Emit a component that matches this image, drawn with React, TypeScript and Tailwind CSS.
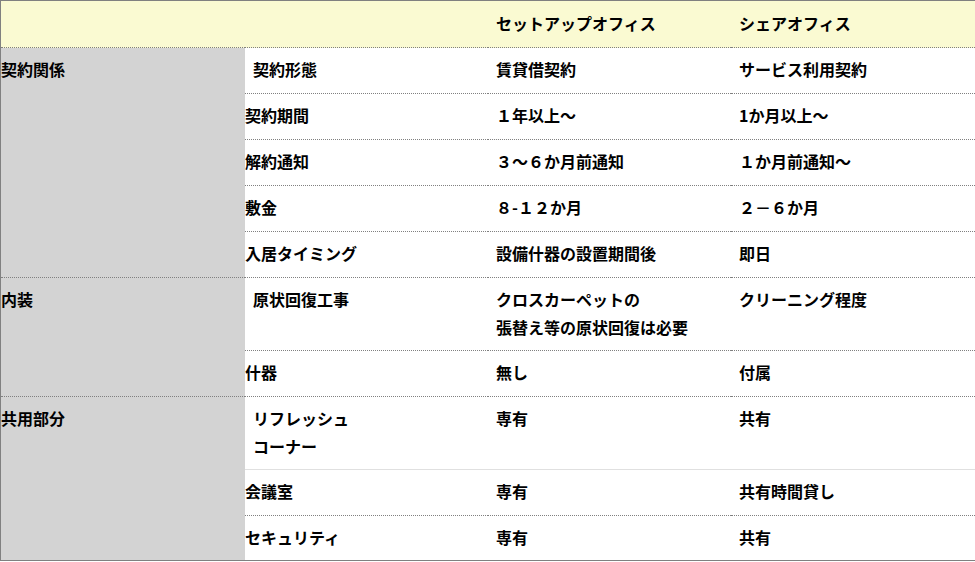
type Row = {
  label?: { text: string; span: number; last?: boolean };
  item: string[];
  setup: string[];
  share: string[];
  lead?: boolean;
  solidBottom?: boolean;
  noBottom?: boolean;
};

const rows: Row[] = [
  { label: { text: '契約関係', span: 5 }, item: ['契約形態'], setup: ['賃貸借契約'], share: ['サービス利用契約'], lead: true },
  { item: ['契約期間'], setup: ['１年以上〜'], share: ['1か月以上〜'] },
  { item: ['解約通知'], setup: ['３〜６か月前通知'], share: ['１か月前通知〜'] },
  { item: ['敷金'], setup: ['８-１２か月'], share: ['２－６か月'] },
  { item: ['入居タイミング'], setup: ['設備什器の設置期間後'], share: ['即日'] },
  {
    label: { text: '内装', span: 2 },
    item: ['原状回復工事'],
    setup: ['クロスカーペットの', '張替え等の原状回復は必要'],
    share: ['クリーニング程度'],
    lead: true,
  },
  { item: ['什器'], setup: ['無し'], share: ['付属'] },
  {
    label: { text: '共用部分', span: 3, last: true },
    item: ['リフレッシュ', 'コーナー'],
    setup: ['専有'],
    share: ['共有'],
    lead: true,
    solidBottom: true,
  },
  { item: ['会議室'], setup: ['専有'], share: ['共有時間貸し'] },
  { item: ['セキュリティ'], setup: ['専有'], share: ['共有'], noBottom: true },
];

function Lines({ lines }: { lines: string[] }) {
  return (
    <>
      {lines.map((l, i) => (
        <div key={i}>{l}</div>
      ))}
    </>
  );
}

export default function App() {
  return (
    <div className="w-[975px] bg-white text-black" style={{ fontFamily: '"Noto Sans CJK JP", "Noto Sans", sans-serif' }}>
      <table className="w-[975px] table-fixed border-separate border-spacing-0 border border-[#808080] text-[16px] font-bold leading-[28px]">
        <colgroup>
          <col className="w-[244px]" />
          <col className="w-[243px]" />
          <col className="w-[243px]" />
          <col className="w-[244px]" />
        </colgroup>
        <thead>
          <tr className="bg-[#fafad2]">
            <th className="border-b border-dotted border-[#808080] pt-[8px] pb-[10px]"></th>
            <th className="border-b border-dotted border-[#808080] pt-[8px] pb-[10px]"></th>
            <th className="border-b border-dotted border-[#808080] pt-[8px] pb-[10px] pl-[8px] text-left font-bold">
              セットアップオフィス
            </th>
            <th className="border-b border-dotted border-[#808080] pt-[8px] pb-[10px] pl-[8px] text-left font-bold">
              シェアオフィス
            </th>
          </tr>
        </thead>
        <tbody>
          {rows.map((r, i) => {
            const tall = r.item.length > 1 || r.setup.length > 1 || r.share.length > 1;
            const pad = tall || r.noBottom ? 'pt-[7px] pb-[9px]' : 'pt-[7px] pb-[10px]';
            const bottom = r.noBottom
              ? ''
              : r.solidBottom
                ? 'border-b border-solid border-[#e0e0e0]'
                : 'border-b border-dotted border-[#808080]';
            const cell = `${pad} ${bottom} align-top text-left`;
            return (
              <tr key={i}>
                {r.label && (
                  <td
                    rowSpan={r.label.span}
                    className={`bg-[#d3d3d3] pt-[7px] pl-0 align-top text-left ${
                      r.label.last ? '' : 'border-b border-dotted border-[#808080]'
                    }`}
                  >
                    {r.label.text}
                  </td>
                )}
                <td className={`${cell} ${r.lead ? 'pl-[8px]' : 'pl-0'}`}>
                  <Lines lines={r.item} />
                </td>
                <td className={`${cell} pl-[8px]`}>
                  <Lines lines={r.setup} />
                </td>
                <td className={`${cell} pl-[8px]`}>
                  <Lines lines={r.share} />
                </td>
              </tr>
            );
          })}
        </tbody>
      </table>
    </div>
  );
}
